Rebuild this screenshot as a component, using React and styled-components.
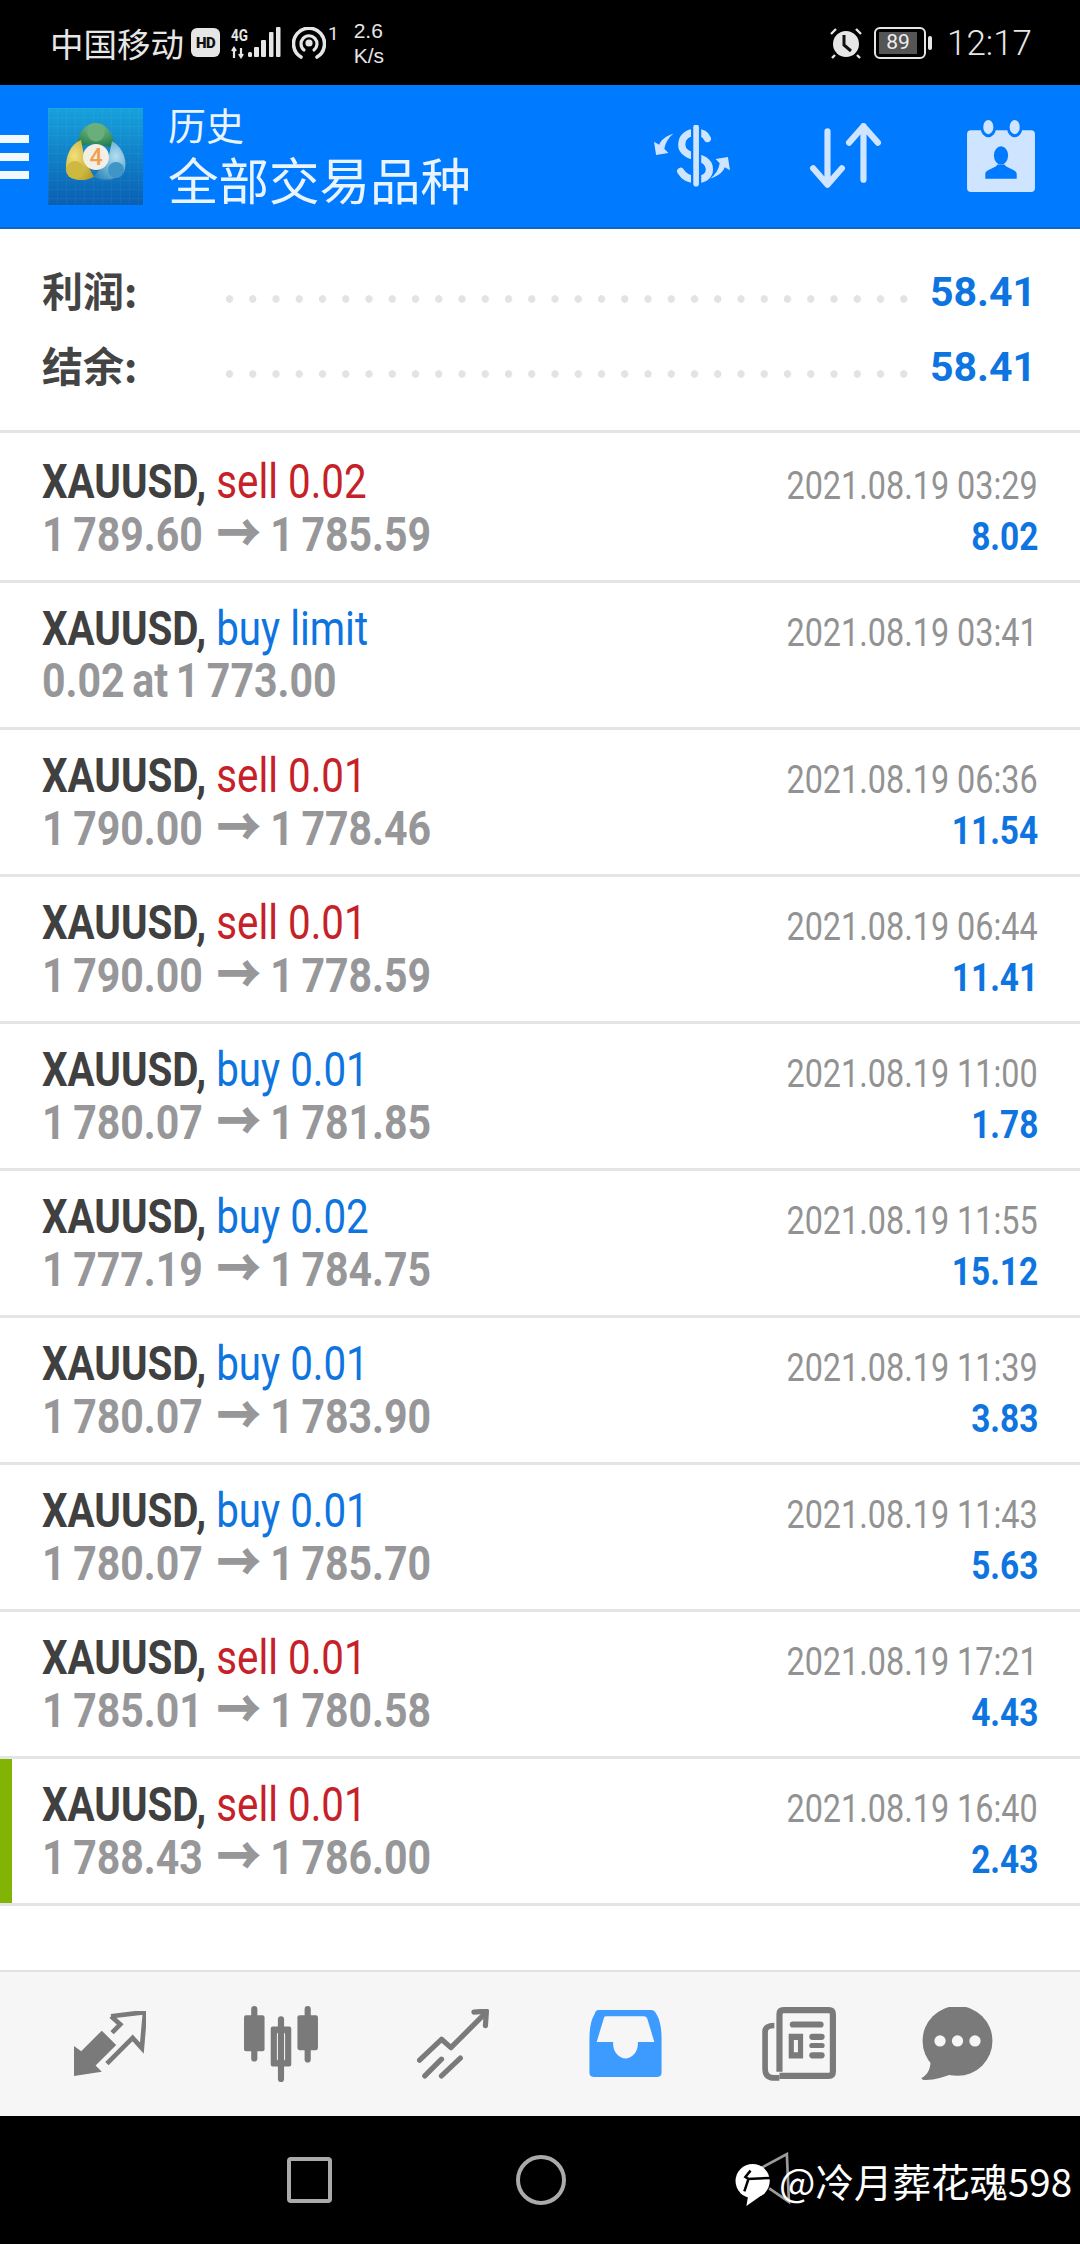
import styled, { createGlobalStyle } from "styled-components";

const GlobalStyle = createGlobalStyle`
  html, body {
    margin: 0;
    padding: 0;
    background: #fff;
  }
  * {
    box-sizing: border-box;
  }
`;

const orders = [
  { side: "sell 0.02", open: "1 789.60", close: "1 785.59", time: "2021.08.19 03:29", profit: "8.02" },
  { side: "buy limit", open: "0.02 at 1 773.00", time: "2021.08.19 03:41" },
  { side: "sell 0.01", open: "1 790.00", close: "1 778.46", time: "2021.08.19 06:36", profit: "11.54" },
  { side: "sell 0.01", open: "1 790.00", close: "1 778.59", time: "2021.08.19 06:44", profit: "11.41" },
  { side: "buy 0.01", open: "1 780.07", close: "1 781.85", time: "2021.08.19 11:00", profit: "1.78" },
  { side: "buy 0.02", open: "1 777.19", close: "1 784.75", time: "2021.08.19 11:55", profit: "15.12" },
  { side: "buy 0.01", open: "1 780.07", close: "1 783.90", time: "2021.08.19 11:39", profit: "3.83" },
  { side: "buy 0.01", open: "1 780.07", close: "1 785.70", time: "2021.08.19 11:43", profit: "5.63" },
  { side: "sell 0.01", open: "1 785.01", close: "1 780.58", time: "2021.08.19 17:21", profit: "4.43" },
  { side: "sell 0.01", open: "1 788.43", close: "1 786.00", time: "2021.08.19 16:40", profit: "2.43", marked: true },
];

const App = () => {
  return (
    <Page>
      <GlobalStyle />
      <StatusBar>
        <Carrier>中国移动</Carrier>
        <HdBadge>HD</HdBadge>
        <SignalIcon />
        <HotspotIcon />
        <HotspotCount>1</HotspotCount>
        <Speed>
          <span>2.6</span>
          <span>K/s</span>
        </Speed>
        <StatusRight>
          <AlarmIcon />
          <Battery>
            <BatteryLevel>89</BatteryLevel>
          </Battery>
          <BatteryNub />
          <Clock>12:17</Clock>
        </StatusRight>
      </StatusBar>

      <Header>
        <Hamburger>
          <i />
          <i />
          <i />
        </Hamburger>
        <AppLogo />
        <Titles>
          <SmallTitle>历史</SmallTitle>
          <BigTitle>全部交易品种</BigTitle>
        </Titles>
        <HeaderIcons>
          <DollarIcon />
          <SortIcon />
          <CalendarIcon />
        </HeaderIcons>
      </Header>

      <Summary>
        <SummaryRow>
          <SummaryLabel>利润:</SummaryLabel>
          <Dots />
          <SummaryValue>58.41</SummaryValue>
        </SummaryRow>
        <SummaryRow>
          <SummaryLabel>结余:</SummaryLabel>
          <Dots />
          <SummaryValue>58.41</SummaryValue>
        </SummaryRow>
      </Summary>

      <List>
        {orders.map((o, i) => (
          <Row key={i} $marked={o.marked}>
            <RowLeft>
              <Line>
                <Symbol>XAUUSD, </Symbol>
                <Side $sell={o.side.startsWith("sell")}>{o.side}</Side>
              </Line>
              <PriceLine>
                {o.open}
                {o.close && (
                  <>
                    {" "}
                    <Arrow>→</Arrow> {o.close}
                  </>
                )}
              </PriceLine>
            </RowLeft>
            <RowRight>
              <TimeText>{o.time}</TimeText>
              {o.profit && <Profit>{o.profit}</Profit>}
            </RowRight>
          </Row>
        ))}
      </List>

      <TabBar>
        <MarketIcon />
        <TabSlot $gap={98}><CandleIcon /></TabSlot>
        <TabSlot $gap={98}><TrendIcon /></TabSlot>
        <TabSlot $gap={100}><InboxIcon /></TabSlot>
        <TabSlot $gap={100}><NewsIcon /></TabSlot>
        <TabSlot $gap={84}><ChatIcon /></TabSlot>
      </TabBar>

      <SystemBar>
        <SquareKey />
        <RoundKey />
        <Watermark>
          <WeiboIcon />
          <WatermarkText>@冷月葬花魂598</WatermarkText>
        </Watermark>
      </SystemBar>
    </Page>
  );
};

// icons

const IconSvg = styled.svg`
  flex-shrink: 0;
  margin-left: ${({ $ml }) => $ml || 0}px;
`;

const SignalIcon = () => (
  <IconSvg $ml={11} width="50" height="32" viewBox="0 0 50 32">
    <text x="0" y="14" fontFamily="Roboto, sans-serif" fontWeight="700" fontSize="16" fill="#e6e6e6" textLength="17" lengthAdjust="spacingAndGlyphs">4G</text>
    <path d="M3 22v9M1 24l2-3 2 3M10 21v8M8 27l2 3 2-3" stroke="#e6e6e6" strokeWidth="2.2" fill="none" />
    <g fill="#e6e6e6">
      <rect x="17" y="25" width="4" height="5" rx="1.5" />
      <rect x="23" y="20" width="5" height="10" rx="1" />
      <rect x="30" y="13" width="5" height="17" rx="1" />
      <rect x="38" y="5" width="4.5" height="25" rx="1" />
      <rect x="45" y="0" width="4.5" height="30" rx="1" />
    </g>
  </IconSvg>
);

const HotspotIcon = () => (
  <IconSvg $ml={11} width="34" height="32" viewBox="0 0 34 32" fill="none" stroke="#e6e6e6">
    <path d="M9 30 A15.5 15.5 0 1 1 25 30" strokeWidth="3.6" strokeLinecap="round" />
    <path d="M12 23 A8 8 0 1 1 22 23" strokeWidth="3.2" strokeLinecap="round" />
    <circle cx="17" cy="16" r="3.6" fill="#e6e6e6" stroke="none" />
  </IconSvg>
);

const AlarmIcon = () => (
  <IconSvg width="34" height="32" viewBox="0 0 34 32">
    <circle cx="17" cy="17" r="13" fill="#e6e6e6" />
    <path d="M15 8v10l7 6" stroke="#111" strokeWidth="3" fill="none" />
    <path d="M2 7l5-5M32 7l-5-5M6 28l-3 3M28 28l3 3" stroke="#e6e6e6" strokeWidth="2.4" />
  </IconSvg>
);

const AppLogo = () => (
  <IconSvg $ml={19} width="95" height="97" viewBox="0 0 95 97">
    <defs>
      <linearGradient id="logoBg" x1="0" y1="0" x2="0" y2="1">
        <stop offset="0" stopColor="#17a2dc" />
        <stop offset="1" stopColor="#0a5fb2" />
      </linearGradient>
      <pattern id="logoGrid" width="9" height="9" patternUnits="userSpaceOnUse">
        <path d="M9 0H0V9" fill="none" stroke="#fff" strokeOpacity="0.07" />
      </pattern>
      <radialGradient id="logoGreen" cx="0.5" cy="0.2" r="0.8">
        <stop offset="0" stopColor="#7cc28a" />
        <stop offset="1" stopColor="#1f7a4c" />
      </radialGradient>
      <radialGradient id="logoYellow" cx="0.3" cy="0.4" r="0.8">
        <stop offset="0" stopColor="#f3e07a" />
        <stop offset="1" stopColor="#b79f22" />
      </radialGradient>
      <radialGradient id="logoBlue" cx="0.7" cy="0.4" r="0.8">
        <stop offset="0" stopColor="#b4def0" />
        <stop offset="1" stopColor="#2b86ba" />
      </radialGradient>
    </defs>
    <rect width="95" height="97" fill="url(#logoBg)" />
    <rect width="95" height="97" fill="url(#logoGrid)" />
    <path d="M48 15C37 15 30 25 29 38L48 36L67 40C66 26 58 15 48 15Z" fill="url(#logoGreen)" />
    <path d="M33 32C22 36 17 50 18 62C20 72 34 75 46 69L37 52Z" fill="url(#logoYellow)" />
    <path d="M64 33C76 40 80 55 76 64C68 73 56 73 45 69L60 52Z" fill="url(#logoBlue)" />
    <circle cx="48" cy="25" r="8.5" fill="#6aae7c" />
    <circle cx="27" cy="62" r="9" fill="#cdb93f" />
    <circle cx="68" cy="62" r="8" fill="#3f95c6" />
    <circle cx="48" cy="49" r="13" fill="#f4efe4" />
    <text x="48" y="57" textAnchor="middle" fontFamily="Roboto, sans-serif" fontWeight="500" fontSize="23" fill="#f0a050">4</text>
  </IconSvg>
);

const DollarIcon = () => (
  <IconSvg width="78" height="62" viewBox="0 0 76 60">
    <path d="M53 13C51 8 46 7 42 7C33 7 28 12 28 19C28 26 34 29 42 31C50 33 55 37 55 43C55 50 49 53 42 53C35 53 30 50 27 45" fill="none" stroke="#cfe4ff" strokeWidth="7" strokeLinecap="round" />
    <path d="M42 0V60" stroke="#007aff" strokeWidth="10" />
    <path d="M42 2V57" stroke="#cfe4ff" strokeWidth="5.5" strokeLinecap="round" />
    <path d="M20 8C12 11 8 14 6 19L1 16L3 29L15 27L11 23C12 17 15 12 20 8Z" fill="#cfe4ff" />
    <path d="M20 8C12 11 8 14 6 19L1 16L3 29L15 27L11 23C12 17 15 12 20 8Z" fill="#cfe4ff" transform="rotate(180 38 30)" />
  </IconSvg>
);

const SortIcon = () => (
  <IconSvg width="74" height="66" viewBox="0 0 72 64" fill="none" stroke="#cfe4ff" strokeWidth="6" strokeLinecap="round" strokeLinejoin="round">
    <path d="M18 8V58M4 44L18 60L32 44" />
    <path d="M53 3V55M39 19L53 3L67 19" />
  </IconSvg>
);

const CalendarIcon = () => (
  <IconSvg $ml={6} width="68" height="72" viewBox="0 0 67 71">
    <rect x="0" y="10" width="67" height="61" rx="4" fill="#cfe4ff" />
    <ellipse cx="21" cy="8" rx="7.5" ry="9" fill="#007aff" />
    <ellipse cx="47" cy="8" rx="7.5" ry="9" fill="#007aff" />
    <ellipse cx="21" cy="7" rx="5" ry="7" fill="#cfe4ff" />
    <ellipse cx="47" cy="7" rx="5" ry="7" fill="#cfe4ff" />
    <ellipse cx="33.5" cy="35" rx="7" ry="9" fill="#007aff" />
    <path d="M18 58v-5c0-4 10-5 12-9h7c2 4 12 5 12 9v5z" fill="#007aff" />
  </IconSvg>
);

const MarketIcon = () => (
  <IconSvg width="72" height="66" viewBox="0 0 70 64">
    <path d="M0 63V34L7 39L27 19L41 33L21 53L27 59Z" fill="#7a7a7a" />
    <path d="M36 5L69 1L66 36L57 26L32 51M36 5L45 13L37 21" fill="none" stroke="#7a7a7a" strokeWidth="4.5" />
  </IconSvg>
);

const CandleIcon = () => (
  <IconSvg width="75" height="76" viewBox="0 0 73 74" fill="#7a7a7a">
    <rect x="7" y="0" width="6" height="54" rx="3" />
    <rect x="0" y="9" width="20" height="35" rx="2" />
    <rect x="33" y="10" width="6" height="64" rx="3" />
    <path fillRule="evenodd" d="M28 20H44Q46 20 46 22V57Q46 59 44 59H28Q26 59 26 57V22Q26 20 28 20ZM33 26Q32 26 32 28V51Q32 53 33 53H39Q40 53 40 51V28Q40 26 39 26Z" />
    <rect x="59" y="0" width="6" height="55" rx="3" />
    <rect x="52" y="9" width="20" height="34" rx="2" />
  </IconSvg>
);

const TrendIcon = () => (
  <IconSvg width="72" height="70" viewBox="0 0 68 67" fill="none" stroke="#7a7a7a" strokeWidth="5" strokeLinecap="round" strokeLinejoin="round">
    <path d="M2 49L23 29L32 37L65 4" />
    <path d="M54 3L66 2L65 16" />
    <path d="M7 64L23 48M23 64L41 47" />
  </IconSvg>
);

const InboxIcon = () => (
  <IconSvg width="73" height="68" viewBox="0 0 70 66">
    <path d="M9 0H60Q63 0 65 4Q70 12 70 28V61Q70 65 66 65H4Q0 65 0 61V28Q0 12 5 4Q6 0 9 0Z" fill="#3d9bff" />
    <path d="M16 6H53Q55 6 56 8L63 31H47V33C47 41 41 47 35 47C29 47 23 41 23 33V31H7L14 8Q14 6 16 6Z" fill="#f6f6f6" />
  </IconSvg>
);

const NewsIcon = () => (
  <IconSvg width="75" height="74" viewBox="0 0 73 72">
    <path d="M17 67H65Q69 67 69 63V7Q69 3 65 3H21Q17 3 17 7V63" fill="none" stroke="#7a7a7a" strokeWidth="6" />
    <path d="M12 18Q3 18 3 24V60Q3 69 12 69H17" fill="none" stroke="#7a7a7a" strokeWidth="5.5" />
    <g fill="#7a7a7a">
      <rect x="27" y="14" width="33" height="6" rx="3" />
      <path fillRule="evenodd" d="M26 26H40V50H26ZM31 32V44H35V32Z" />
      <rect x="46" y="26" width="15" height="6" rx="3" />
      <rect x="46" y="35" width="15" height="5" rx="2.5" />
      <rect x="46" y="44" width="15" height="6" rx="3" />
    </g>
  </IconSvg>
);

const ChatIcon = () => (
  <IconSvg width="73" height="74" viewBox="0 0 70 72">
    <circle cx="35" cy="33" r="34" fill="#7a7a7a" />
    <path d="M9 50C9 60 6 66 0 69Q0 71 4 71C14 71 22 68 30 65Z" fill="#7a7a7a" />
    <g fill="#f6f6f6">
      <circle cx="18" cy="33" r="5.5" />
      <circle cx="35" cy="33" r="5.5" />
      <circle cx="52" cy="33" r="5.5" />
    </g>
  </IconSvg>
);

const WeiboIcon = () => (
  <IconSvg width="56" height="56" viewBox="0 0 54 54">
    <path d="M13 22L50 2L52 48L33 35" fill="none" stroke="#9a9a9a" strokeWidth="2.6" />
    <circle cx="17" cy="28" r="16.5" fill="#fff" />
    <path d="M13 40L11 52L24 43Z" fill="#fff" />
    <path d="M12 26L34 25M15 18L10 24L13 26L9 38" fill="none" stroke="#000" strokeWidth="2.4" />
  </IconSvg>
);

//Styled-Components

const Page = styled.div`
  width: 1080px;
  height: 2244px;
  display: flex;
  flex-direction: column;
  background: #fff;
  overflow: hidden;
  font-family: Roboto, "Noto Sans CJK SC", sans-serif;
`;

const StatusBar = styled.div`
  height: 85px;
  flex-shrink: 0;
  background: #000;
  color: #e6e6e6;
  display: flex;
  align-items: center;
  padding-left: 50px;
  padding-right: 48px;
`;

const Carrier = styled.span`
  font-family: "Noto Sans CJK SC", sans-serif;
  font-size: 33.5px;
  line-height: 40px;
`;

const HdBadge = styled.span`
  width: 29px;
  height: 29px;
  margin-left: 7px;
  border-radius: 6px;
  background: #e6e6e6;
  color: #111;
  font-size: 15px;
  font-weight: 900;
  letter-spacing: -0.5px;
  display: flex;
  align-items: center;
  justify-content: center;
`;

const HotspotCount = styled.span`
  font-size: 19px;
  margin: -18px 0 0 2px;
`;

const Speed = styled.div`
  display: flex;
  flex-direction: column;
  margin-left: 15px;
  font-family: "Liberation Sans", sans-serif;
  font-size: 21px;
  line-height: 25px;
`;

const StatusRight = styled.div`
  margin-left: auto;
  display: flex;
  align-items: center;
`;

const Battery = styled.div`
  width: 52px;
  height: 32px;
  margin-left: 11px;
  border: 2.5px solid #e6e6e6;
  border-radius: 6px;
  padding: 3px;
  display: flex;
`;

const BatteryLevel = styled.div`
  width: 38px;
  background: #555;
  color: #eee;
  font-size: 21px;
  line-height: 21px;
  text-align: center;
`;

const BatteryNub = styled.div`
  width: 4px;
  height: 14px;
  margin-left: 2px;
  border-radius: 2px;
  background: #e6e6e6;
`;

const Clock = styled.span`
  margin-left: 15px;
  padding-top: 2px;
  font-size: 35px;
  font-weight: 300;
`;

const Header = styled.div`
  height: 144px;
  flex-shrink: 0;
  background: #007aff;
  border-bottom: 2px solid #0d68c9;
  display: flex;
  align-items: center;
`;

const Hamburger = styled.div`
  width: 29px;
  display: flex;
  flex-direction: column;
  gap: 10px;
  margin-top: 2px;

  i {
    display: block;
    height: 8px;
    background: #f1f8ff;
  }
`;

const Titles = styled.div`
  margin-left: 25px;
  display: flex;
  flex-direction: column;
  color: #eaf4ff;
  font-family: "Noto Sans CJK SC", sans-serif;
`;

const SmallTitle = styled.span`
  font-size: 38px;
  line-height: 44px;
`;

const BigTitle = styled.span`
  font-size: 50.5px;
  line-height: 64px;
`;

const HeaderIcons = styled.div`
  margin-left: auto;
  padding-right: 45px;
  display: flex;
  align-items: center;
  gap: 78px;
`;

const Summary = styled.div`
  height: 204px;
  flex-shrink: 0;
  padding: 26px 44px 0 42px;
  border-bottom: 3px solid #e4e4e4;
`;

const SummaryRow = styled.div`
  height: 74.5px;
  display: flex;
  align-items: center;
`;

const SummaryLabel = styled.span`
  width: 184px;
  flex-shrink: 0;
  margin-top: -6px;
  font-family: "Noto Sans CJK SC", sans-serif;
  font-size: 41px;
  font-weight: 700;
  color: #444;
`;

const Dots = styled.div`
  width: 688px;
  height: 8px;
  margin-top: 14px;
  background-image: radial-gradient(circle at 3.5px 4px, #e3e3e3 3.5px, transparent 4px);
  background-size: 23.25px 8px;
  background-repeat: repeat-x;
`;

const SummaryValue = styled.span`
  margin-left: auto;
  font-size: 41px;
  font-weight: 700;
  color: #0e74e0;
`;

const List = styled.div`
  flex: 1;
  padding-top: 3px;
`;

const Row = styled.div`
  height: 147px;
  display: flex;
  justify-content: space-between;
  padding: 20px 42px 0 42px;
  border-bottom: 3px solid #e4e4e4;
  position: relative;

  ${({ $marked }) =>
    $marked &&
    `
    &::before {
      content: "";
      position: absolute;
      left: 0;
      top: 0;
      bottom: 0;
      width: 12px;
      background: #82b406;
    }
  `}
`;

const RowLeft = styled.div`
  display: flex;
  flex-direction: column;
`;

const Line = styled.div`
  height: 52px;
  line-height: 52px;
  font-size: 48px;
  white-space: nowrap;
  transform: scaleX(0.84);
  transform-origin: left center;
`;

const Symbol = styled.span`
  font-weight: 700;
  color: #404040;
`;

const Side = styled.span`
  color: ${({ $sell }) => ($sell ? "#c62128" : "#0e74e0")};
`;

const PriceLine = styled.div`
  height: 52px;
  line-height: 52px;
  font-size: 48px;
  font-weight: 700;
  color: #97979a;
  white-space: nowrap;
  word-spacing: -3px;
  transform: scaleX(0.855);
  transform-origin: left center;
`;

const Arrow = styled.span`
  margin: 0 3px 0 8px;
  font-size: 50px;
  -webkit-text-stroke: 1.6px #97979a;
`;

const RowRight = styled.div`
  display: flex;
  flex-direction: column;
  align-items: flex-end;
  padding-top: 4px;
`;

const TimeText = styled.div`
  height: 52px;
  line-height: 52px;
  font-size: 39px;
  color: #929292;
  white-space: nowrap;
  transform: scaleX(0.83);
  transform-origin: right center;
`;

const Profit = styled.div`
  height: 50px;
  line-height: 50px;
  font-size: 38px;
  font-weight: 700;
  color: #0e74e0;
  transform: scaleX(0.88);
  transform-origin: right center;
`;

const TabBar = styled.div`
  height: 146px;
  flex-shrink: 0;
  background: #f6f6f6;
  border-top: 2px solid #e2e2e2;
  padding-left: 74px;
  display: flex;
  align-items: center;
`;

const TabSlot = styled.div`
  margin-left: ${({ $gap }) => $gap}px;
  display: flex;
`;

const SystemBar = styled.div`
  height: 128px;
  flex-shrink: 0;
  background: #000;
  display: flex;
  align-items: center;
  padding-left: 287px;
`;

const SquareKey = styled.div`
  width: 45px;
  height: 46px;
  border: 4px solid #aaa;
  border-radius: 4px;
`;

const RoundKey = styled.div`
  width: 50px;
  height: 50px;
  margin-left: 184px;
  border: 4px solid #aaa;
  border-radius: 50%;
`;

const Watermark = styled.div`
  margin-left: 169px;
  display: flex;
  align-items: center;
  color: #fff;
`;

const WatermarkText = styled.span`
  margin-left: -12px;
  font-family: "Noto Sans CJK SC", sans-serif;
  font-size: 38.5px;
  white-space: nowrap;
`;

export default App;
